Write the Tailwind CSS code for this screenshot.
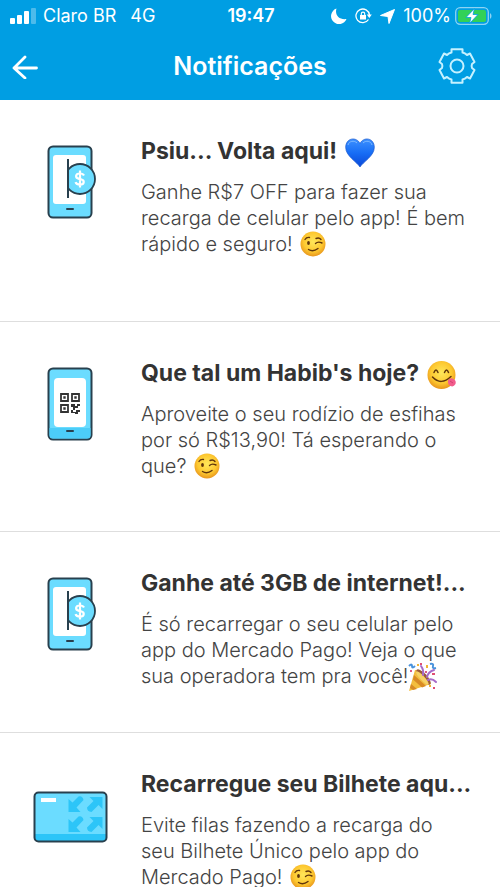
<!DOCTYPE html>
<html lang="pt-BR">
<head>
<meta charset="utf-8">
<meta name="viewport" content="width=device-width, initial-scale=1">
<title>Notificações</title>
<script src="https://cdn.jsdelivr.net/npm/@tailwindcss/browser@4"></script>
</head>
<body class="flex h-screen flex-col overflow-hidden bg-white font-['Inter','Open_Sans',sans-serif]">
<svg class="absolute size-0" aria-hidden="true">
  <defs>
    <radialGradient id="face" cx=".5" cy=".42" r=".58"><stop offset="0" stop-color="#ffe75a"/><stop offset=".65" stop-color="#fdc830"/><stop offset="1" stop-color="#e8951c"/></radialGradient>
    <linearGradient id="blue" x1="0" y1="0" x2="0" y2="1"><stop offset="0" stop-color="#3d91ff"/><stop offset=".5" stop-color="#176df5"/><stop offset="1" stop-color="#0a48d8"/></linearGradient>
    <symbol id="heart" viewBox="0 0 30 30"><path d="M15 29C12 24 .7 18 .7 9.500c0-10 11-11 14.300-4 3.300-7 14.300-6 14.300 4C29.300 18 18 24 15 29Z" fill="url(#blue)" stroke="#1556cf" stroke-width=".7"/><path d="M3 7c1-4 6-5 9-2M18 5c3-3 8-2 9 2" fill="none" stroke="#7db8ff" stroke-width="1"/></symbol>
    <symbol id="wink" viewBox="0 0 26 26"><circle cx="13" cy="13" r="12.5" fill="url(#face)"/><ellipse cx="8.500" cy="12" rx="1.400" ry="2" fill="#60350b"/><path d="M5 8.500Q6.500 6 9.500 6.500M16 7.500Q19 6 21 8.500M15.500 12.500Q18 10 22 12M8.500 18.500Q13 21.500 18 17.500" fill="none" stroke="#60350b" stroke-width="1.400" stroke-linecap="round"/></symbol>
    <symbol id="yum" viewBox="0 0 30 30"><circle cx="14.500" cy="15" r="14" fill="url(#face)"/><path d="M7 12.500Q9 7.500 11 12.500M17.500 12.500Q19.500 7.500 21.500 12.500M5.500 17Q14 26 24 16.500" fill="none" stroke="#60350b" stroke-width="1.500" stroke-linecap="round"/><path d="M21 20.500Q23 17 26.500 19q3 1.500 2 5-2 3.500-5 2-3-1.500-2.500-5.500Z" fill="#f25c8c"/><path d="m23 21 3 2" stroke="#c63a69" stroke-width=".8"/></symbol>
    <symbol id="party" viewBox="0 0 30 30"><path d="M1 29 7 8q4 0 9 5t7 9Z" fill="#f3bd3d"/><path d="m6 13 12 11-4 1.500-9-8ZM3 22l6 5-4 1-3-2Z" fill="#d88a25"/><ellipse cx="15.500" cy="15" rx="3.500" ry="10" transform="rotate(-43 15.500 15)" fill="#9a5a36"/><ellipse cx="14.300" cy="16" rx="2.300" ry="9" transform="rotate(-43 14.300 16)" fill="#f6d166"/><path d="M15 13q1-5-2-9M19 15q1-5 7-7M20 18q4-2 8 2" fill="none" stroke="#a66bc9" stroke-width="2" stroke-linecap="round"/><path d="M1 4q3-3 3 0t3 0M22 2q4-1 3 2t3 2" fill="none" stroke="#4a93dc" stroke-width="2"/><path d="M12 1h2v2h-2zM24 11h3v2h-3zM25 25h2v2h-2z" fill="#e04f73"/><path d="M18 3h2v3h-2zM9 2h2v2H9zM21 23h2v2h-2z" fill="#f2b534"/><path d="M17 9h2v2h-2zM2 8h2v2H2z" fill="#dc5b85"/></symbol>
    <symbol id="recharge" viewBox="0 0 50 75"><rect x="1.500" y="1.500" width="43" height="71" rx="4.500" fill="#6bdcff" stroke="#28404e" stroke-width="2"/><rect x="6" y="10" width="33" height="49" rx="3" fill="#fff"/><circle cx="33" cy="34" r="15" fill="#6bdcff" stroke="#28404e" stroke-width="1.800"/><path d="M6 20h14v33H6z" fill="#fff"/><path d="M21 14v39" stroke="#28404e" stroke-width="2"/><path d="M20 64h6" stroke="#28404e" stroke-width="2" stroke-linecap="round"/><path d="M37 30.500Q36 28.500 33 28.500c-5 0-5 4.500-1 5.300l2 .4c4 1 3.500 5.500-1 5.500q-3.500 0-4.500-2.500M33 25.500v17" fill="none" stroke="#fff" stroke-width="2.200"/></symbol>
  </defs>
</svg>

<header class="shrink-0 bg-[#009ee3] text-white">
  <div class="grid h-8 grid-cols-[1fr_auto_1fr] items-center pr-2 pl-2.5 text-[18px] leading-8">
    <div class="flex items-center gap-1.5">
      <svg class="h-4 w-[27px]" viewBox="0 0 27 16" fill="currentColor" role="img" aria-label="Sinal"><rect x="0" y="10" width="5" height="6" rx="1"/><rect x="7" y="7" width="5" height="9" rx="1"/><rect x="14" y="3" width="5" height="13" rx="1"/><rect x="21" y="0" width="5" height="16" rx="1" opacity=".3"/></svg>
      <span>Claro BR</span>
      <span class="pl-2">4G</span>
    </div>
    <time class="font-semibold">19:47</time>
    <div class="flex items-center justify-end">
      <svg class="mr-2 size-4" viewBox="0 0 16 16" fill="currentColor" aria-hidden="true"><path d="M5.500.5C3.500 7 8 12 15.500 11A8 8 0 1 1 5.500.5Z"/></svg>
      <svg class="mr-2 h-4 w-[17px]" viewBox="0 0 17 16" aria-hidden="true"><path d="M13.500 11.500A6.800 6.800 0 1 1 14.500 7" fill="none" stroke="currentColor" stroke-width="1.300"/><path d="M11.800 6.500h5l-2.500 3.500ZM5 7h6v4.500H5z" fill="currentColor"/><path d="M6.300 7.500V5.800a1.700 1.700 0 0 1 3.400 0v1.700" fill="none" stroke="currentColor" stroke-width="1.100"/></svg>
      <svg class="mr-2 size-[15px]" viewBox="0 0 15 15" fill="currentColor" aria-hidden="true"><path d="M14.500.5 9 14.500 8 7.500.5 6.500Z" stroke="currentColor" stroke-linejoin="round"/></svg>
      <span>100%</span>
      <svg class="ml-1 h-[18px] w-[37px]" viewBox="0 0 37 18" role="img" aria-label="Bateria carregando"><rect x=".7" y=".7" width="32.600" height="16.600" rx="4.500" fill="none" stroke="#8dd3f4" stroke-width="1.300"/><rect x="3" y="3" width="28" height="12" rx="2" fill="#32d158"/><path d="M35 6v6q1.500-1 1.500-3T35 6Z" fill="#8dd3f4"/><path d="m19.500 1.500-8.500 9h5l-1.500 6 8.500-9h-5Z" fill="#fff" stroke="#009ee3" stroke-width=".8"/></svg>
    </div>
  </div>
  <div class="grid h-[68px] grid-cols-[1fr_auto_1fr] items-center px-3">
    <button type="button" aria-label="Voltar" class="justify-self-start"><svg class="size-[26px]" viewBox="0 0 26 26" fill="none" stroke="currentColor" stroke-width="2.800" stroke-linecap="round" stroke-linejoin="round"><path d="M24.500 15H2M13 4 2 15l11 10"/></svg></button>
    <h1 class="text-[25px] leading-8 font-semibold">Notificações</h1>
    <button type="button" aria-label="Configurações" class="mr-3 justify-self-end"><svg class="size-[38px]" viewBox="0 0 38 38" fill="none" stroke="#c5f1ff" stroke-width="2" stroke-linejoin="round"><path d="M13.500 2.200h11v3.300q2.500.5 4.500 2.500l3-1.500 4.500 8.500-2.500 2q-.8 2 0 4l2.500 2-4.500 8.500-3-1.500q-2 2-4.500 2.500v3.300h-11v-3.300q-2.500-.5-4.500-2.500l-3 1.500-4.500-8.500 2.500-2q.8-2 0-4l-2.500-2 4.500-8.500 3 1.500q2-2 4.500-2.500Z"/><circle cx="19" cy="19" r="6.500"/></svg></button>
  </div>
</header>

<main class="min-h-0 flex-1 overflow-y-auto [scrollbar-width:none]">
  <ul class="divide-y divide-[#dedede] text-[#333]">
    <li class="flex pt-9 pb-16">
      <div class="w-[141px] shrink-0 pt-[9px] pl-[47px]"><svg class="h-[75px] w-[50px]" aria-hidden="true"><use href="#recharge"/></svg></div>
      <div class="min-w-0 flex-1 whitespace-nowrap">
        <h2 class="mb-[13px] text-[23px] leading-[30px] font-bold">Psiu... Volta aqui! <svg class="-my-1 ml-0.5 inline-block size-[30px] align-[-5px]" role="img" aria-label="coração azul"><use href="#heart"/></svg></h2>
        <p class="text-[20px] leading-[26px] font-light text-[#444]">Ganhe R$7 OFF para fazer sua<br>recarga de celular pelo app! É bem<br>rápido e seguro! <svg class="-my-1 ml-0.5 inline-block size-[26px] align-[-2px]" role="img" aria-label="piscadela"><use href="#wink"/></svg></p>
      </div>
    </li>
    <li class="flex pt-9 pb-[52px]">
      <div class="w-[141px] shrink-0 pt-[9px] pl-[47px]"><svg class="h-[75px] w-[50px]" viewBox="0 0 50 75" aria-hidden="true"><rect x="1.500" y="1.500" width="43" height="71" rx="4.500" fill="#6bdcff" stroke="#28404e" stroke-width="2"/><path d="M2.500 61h41v7q0 3.500-3.500 3.500H6q-3.500 0-3.500-3.500Z" fill="#4ccdf8"/><rect x="7" y="11" width="32" height="49" rx="4" fill="#fff"/><path d="M20 64h6" stroke="#28404e" stroke-width="2" stroke-linecap="round"/><g fill="none" stroke="#333" stroke-width="1.800"><path d="M14 27h7v7h-7zM25 27h7v7h-7zM14 38h7v7h-7z"/></g><path d="M16.300 29.300h2.400v2.400h-2.400zM27.300 29.300h2.400v2.400h-2.400zM16.300 40.300h2.400v2.400h-2.400zM24 37h4v2h2v-2h3v2h-2v2h-3v2h-2v-3h-2zM24 43h2v2h3v-2h4v2h-2v2h-3v-1h-4z" fill="#333"/></svg></div>
      <div class="min-w-0 flex-1 whitespace-nowrap">
        <h2 class="mb-[13px] text-[23px] leading-[30px] font-bold">Que tal um Habib's hoje? <svg class="-my-1 ml-0.5 inline-block size-[30px] align-[-5px]" role="img" aria-label="delícia"><use href="#yum"/></svg></h2>
        <p class="text-[20px] leading-[26px] font-light text-[#444]">Aproveite o seu rodízio de esfihas<br>por só R$13,90! Tá esperando o<br>que? <svg class="-my-1 ml-0.5 inline-block size-[26px] align-[-2px]" role="img" aria-label="piscadela"><use href="#wink"/></svg></p>
      </div>
    </li>
    <li class="flex pt-9 pb-[43px]">
      <div class="w-[141px] shrink-0 pt-[9px] pl-[47px]"><svg class="h-[75px] w-[50px]" aria-hidden="true"><use href="#recharge"/></svg></div>
      <div class="min-w-0 flex-1 whitespace-nowrap">
        <h2 class="mb-[13px] text-[23px] leading-[30px] font-bold">Ganhe até 3GB de internet!...</h2>
        <p class="text-[20px] leading-[26px] font-light text-[#444]">É só recarregar o seu celular pelo<br>app do Mercado Pago! Veja o que<br>sua operadora tem pra você!<svg class="-my-1 inline-block size-[30px] align-[-5px]" role="img" aria-label="festa"><use href="#party"/></svg></p>
      </div>
    </li>
    <li class="flex pt-9 pb-11">
      <div class="w-[141px] shrink-0 pt-[22px] pl-[33px]"><svg class="h-[52px] w-[75px]" viewBox="0 0 75 52" aria-hidden="true"><rect x="1.500" y="1.500" width="72" height="49" rx="4" fill="#6bdcff"/><path d="M2 43h71v4q0 3-3 3H5q-3 0-3-3Z" fill="#2cc5f8"/><path d="M8 7h15v4H8z" fill="#fff"/><g fill="#2cc5f8"><path d="M35.500 8l4 3.500 6-6q4-1 5 3.500l-7 7.500 4 4.500h-12ZM69.500 6h-13l4 4-6.500 6.500q0 4 4.500 4.500l7-7 4 4ZM35.500 28l4 3.500 6-6q4-1 5 3.500l-7 7.500 4 4.500h-12ZM69.500 26h-13l4 4-6.500 6.500q0 4 4.500 4.500l7-7 4 4Z"/></g><rect x="1.500" y="1.500" width="72" height="49" rx="4" fill="none" stroke="#28404e" stroke-width="2"/></svg></div>
      <div class="min-w-0 flex-1 whitespace-nowrap">
        <h2 class="mb-[13px] text-[23px] leading-[30px] font-bold">Recarregue seu Bilhete aqu...</h2>
        <p class="text-[20px] leading-[26px] font-light text-[#444]">Evite filas fazendo a recarga do<br>seu Bilhete Único pelo app do<br>Mercado Pago! <svg class="-my-1 ml-0.5 inline-block size-[26px] align-[-2px]" role="img" aria-label="piscadela"><use href="#wink"/></svg></p>
      </div>
    </li>
  </ul>
</main>
</body>
</html>
